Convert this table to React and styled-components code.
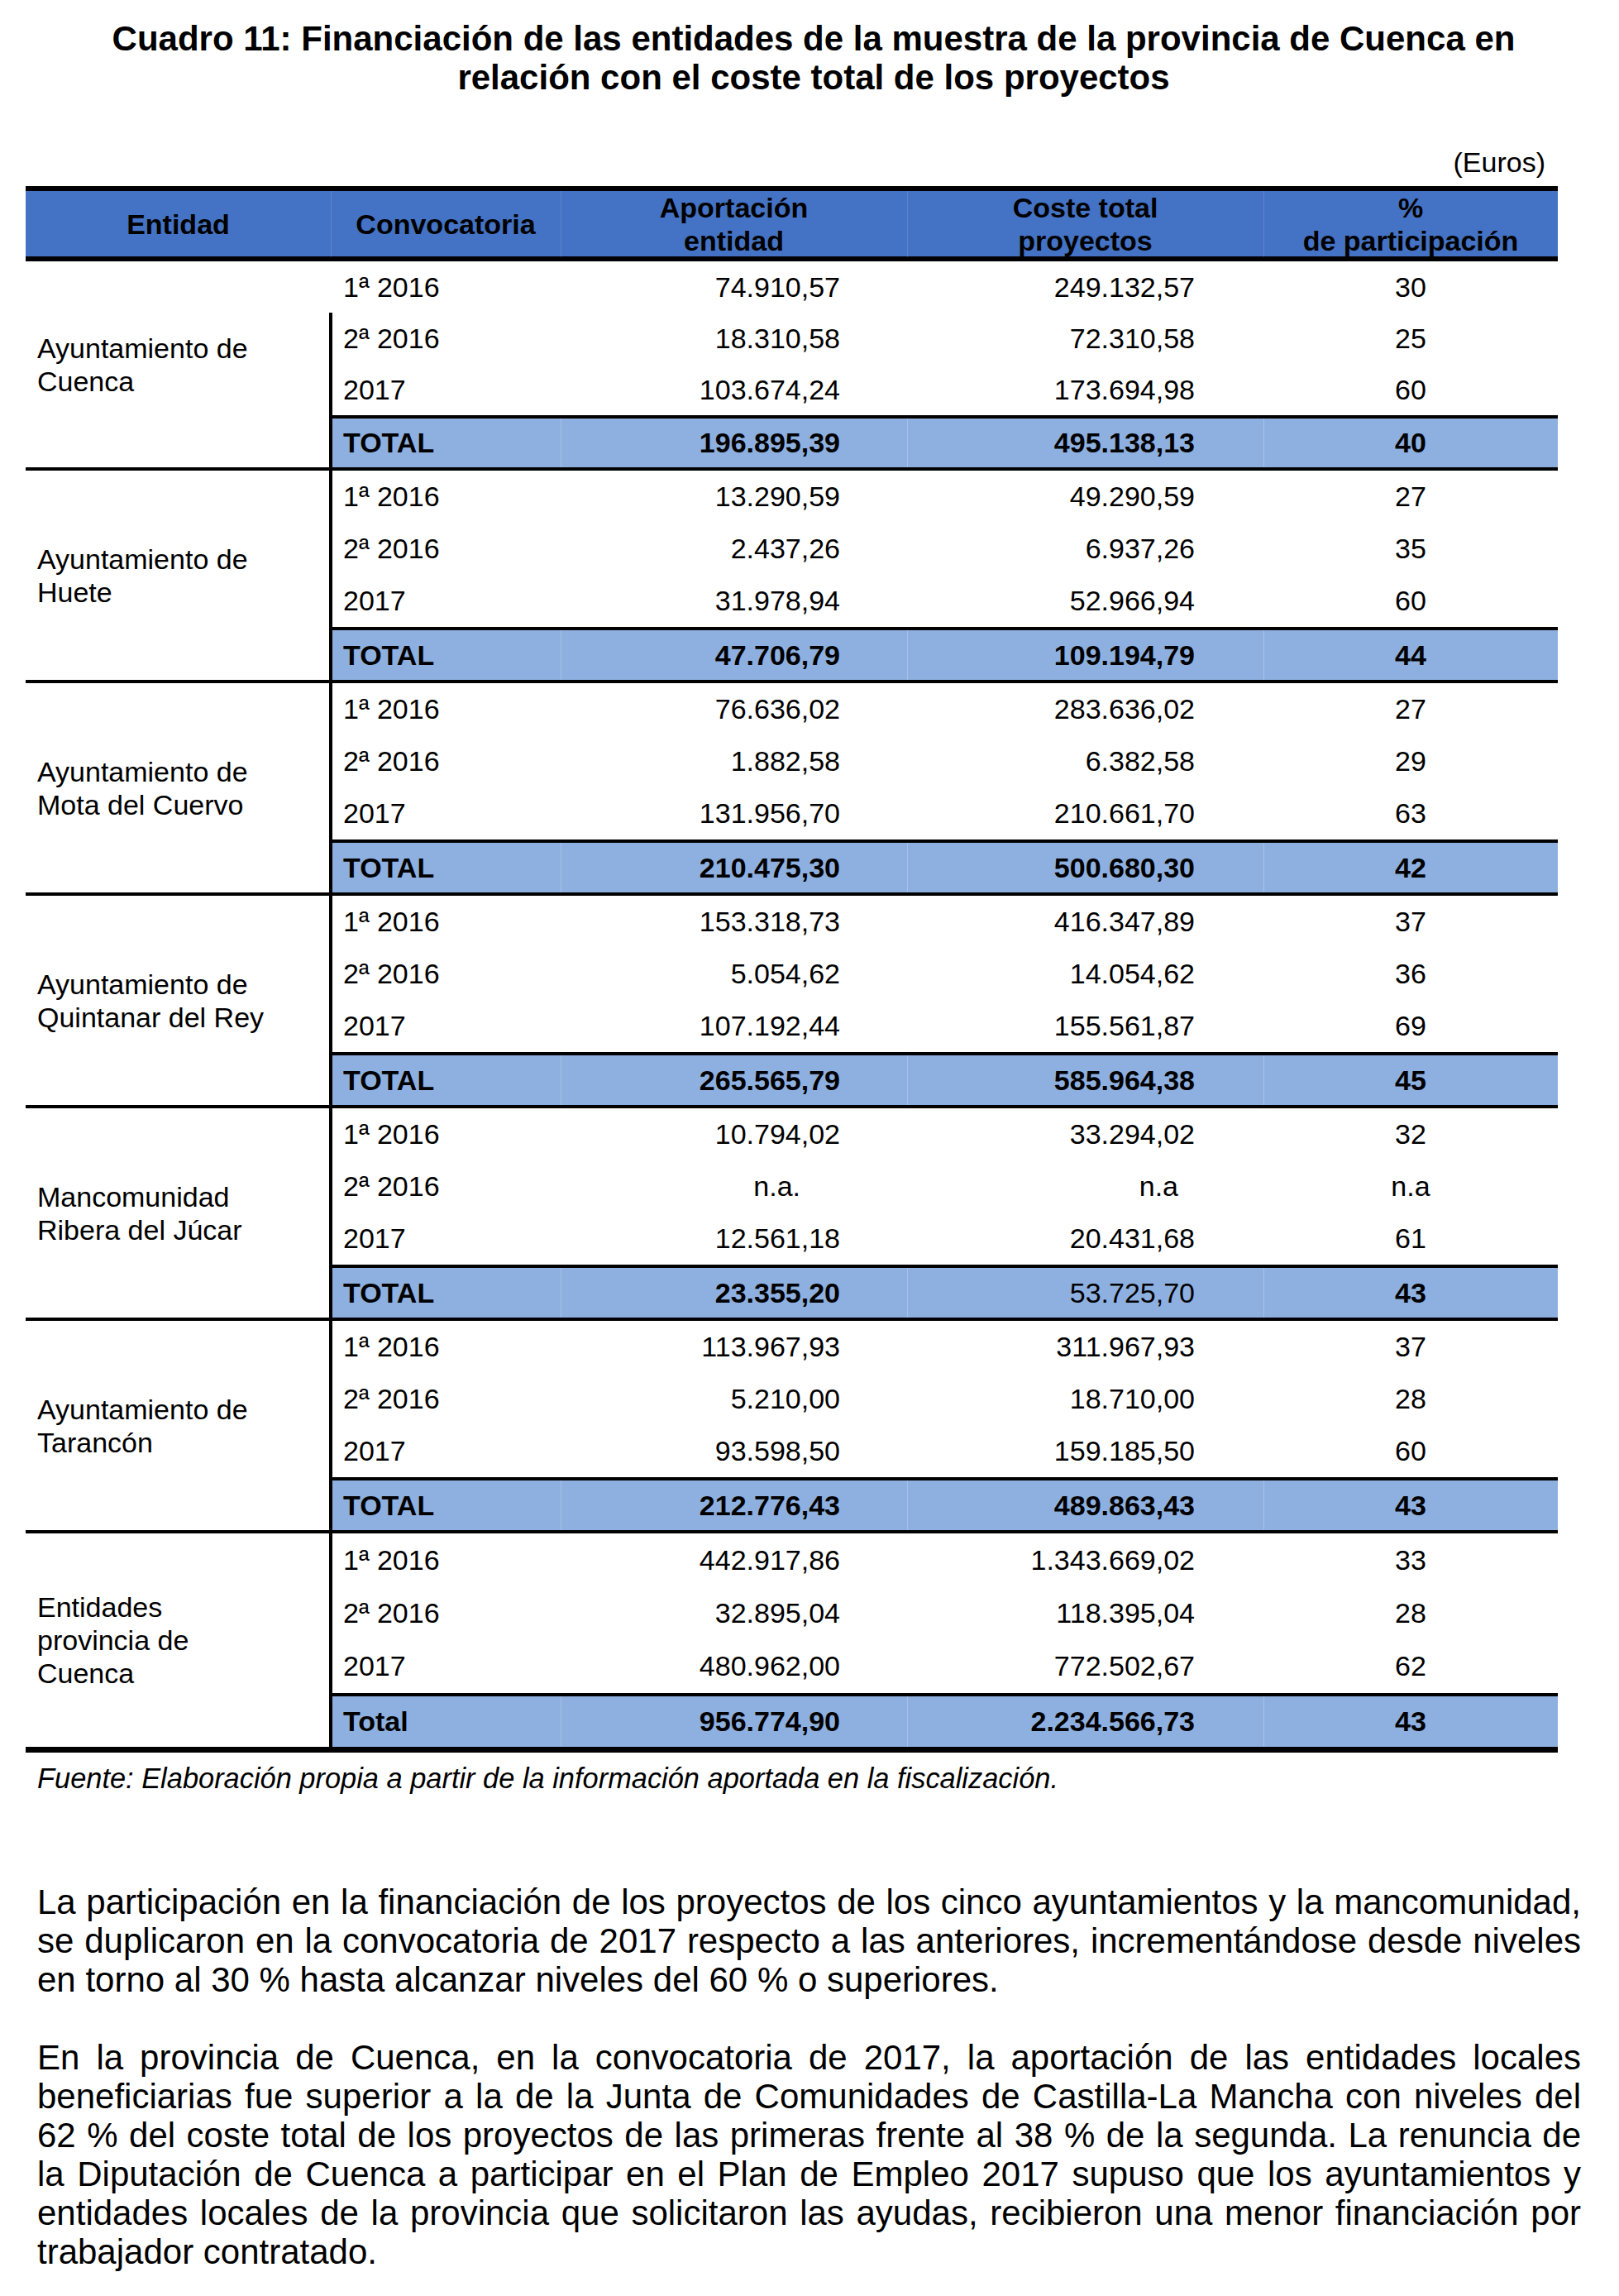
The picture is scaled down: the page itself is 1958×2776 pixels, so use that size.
import React from "react";
import styled, { createGlobalStyle } from "styled-components";

const Global = createGlobalStyle`
  html, body { margin: 0; padding: 0; background: #fff; }
  body { font-family: "Liberation Sans", Arial, sans-serif; color: #000; }
`;

const Page = styled.div`
  width: 1958px;
  padding-top: 23px;
  box-sizing: border-box;
`;

const Title = styled.h1`
  margin: 0;
  padding: 0 74px 0 84px;
  font-size: 42px;
  line-height: 47px;
  font-weight: 700;
  text-align: center;
`;

const Unit = styled.div`
  margin-top: 60px;
  padding-right: 89px;
  text-align: right;
  font-size: 34px;
  line-height: 38px;
`;

const Table = styled.div`
  margin: 10px 0 0 31px;
  width: 1853px;
`;

const HeaderRow = styled.div`
  display: grid;
  grid-template-columns: 369px 278px 419px 431px 356px;
  height: 79px;
  background: #4472c4;
  border-top: 6px solid #000;
  border-bottom: 6px solid #000;
`;

const HeaderCell = styled.div`
  display: flex;
  align-items: center;
  justify-content: center;
  text-align: center;
  font-size: 34px;
  line-height: 40px;
  font-weight: 700;
  box-shadow: ${(p) => (p.$first ? "none" : "inset 1px 0 0 rgba(255,255,255,0.14)")};
`;

const Group = styled.div`
  display: grid;
  grid-template-columns: 367px 1486px;
  border-bottom: ${(p) => p.$bottom}px solid #000;
`;

const EntityCell = styled.div`
  display: flex;
  align-items: center;
  padding-left: 14px;
  font-size: 34px;
  line-height: 40px;
`;

const Rows = styled.div`
  display: flex;
  flex-direction: column;
`;

const Row = styled.div`
  display: grid;
  grid-template-columns: 276px 419px 431px 356px;
  height: ${(p) => p.$h}px;
  border-left: 4px solid ${(p) => (p.$noLine ? "transparent" : "#000")};
  background: ${(p) => (p.$total ? "#8eb0e0" : "#fff")};
  border-top: ${(p) => (p.$total ? "4px solid #000" : "none")};
  font-weight: ${(p) => (p.$total ? 700 : 400)};
`;

const Cell = styled.div`
  display: flex;
  align-items: center;
  justify-content: ${(p) =>
    p.$align === "right" ? "flex-end" : p.$align === "center" ? "center" : "flex-start"};
  padding-left: ${(p) => p.$pl || 0}px;
  padding-right: ${(p) => p.$pr || 0}px;
  font-size: 34px;
  white-space: nowrap;
  font-weight: ${(p) => (p.$regular ? 400 : "inherit")};
  box-shadow: ${(p) => (p.$divider ? "inset 1px 0 0 rgba(255,255,255,0.22)" : "none")};
`;

const Source = styled.p`
  margin: 12px 0 0 45px;
  font-size: 34.4px;
  line-height: 39px;
  font-style: italic;
`;

const Body = styled.div`
  margin-top: 106px;
  padding: 0 46px 0 45px;
  display: flex;
  flex-direction: column;
  gap: 47px;
`;

const Paragraph = styled.p`
  margin: 0;
  font-size: 42px;
  line-height: 47px;
  text-align: justify;
`;

const PARA_1 =
  "La participación en la financiación de los proyectos de los cinco ayuntamientos y la mancomunidad, se duplicaron en la convocatoria de 2017 respecto a las anteriores, incrementándose desde niveles en torno al 30\u00a0% hasta alcanzar niveles del 60\u00a0% o superiores.";

const PARA_2 =
  "En la provincia de Cuenca, en la convocatoria de 2017, la aportación de las entidades locales beneficiarias fue superior a la de la Junta de Comunidades de Castilla-La Mancha con niveles del 62\u00a0% del coste total de los proyectos de las primeras frente al 38\u00a0% de la segunda. La renuncia de la Diputación de Cuenca a participar en el Plan de Empleo 2017 supuso que los ayuntamientos y entidades locales de la provincia que solicitaron las ayudas, recibieron una menor financiación por trabajador contratado.";

const groups = [
  {
    name: ["Ayuntamiento de", "Cuenca"],
    rows: [
      ["1ª 2016", "74.910,57", "249.132,57", "30"],
      ["2ª 2016", "18.310,58", "72.310,58", "25"],
      ["2017", "103.674,24", "173.694,98", "60"],
    ],
    total: ["TOTAL", "196.895,39", "495.138,13", "40"],
    h: [62, 62, 62],
    th: 59,
    firstNoLine: true,
  },
  {
    name: ["Ayuntamiento de", "Huete"],
    rows: [
      ["1ª 2016", "13.290,59", "49.290,59", "27"],
      ["2ª 2016", "2.437,26", "6.937,26", "35"],
      ["2017", "31.978,94", "52.966,94", "60"],
    ],
    total: ["TOTAL", "47.706,79", "109.194,79", "44"],
  },
  {
    name: ["Ayuntamiento de", "Mota del Cuervo"],
    rows: [
      ["1ª 2016", "76.636,02", "283.636,02", "27"],
      ["2ª 2016", "1.882,58", "6.382,58", "29"],
      ["2017", "131.956,70", "210.661,70", "63"],
    ],
    total: ["TOTAL", "210.475,30", "500.680,30", "42"],
  },
  {
    name: ["Ayuntamiento de", "Quintanar del Rey"],
    rows: [
      ["1ª 2016", "153.318,73", "416.347,89", "37"],
      ["2ª 2016", "5.054,62", "14.054,62", "36"],
      ["2017", "107.192,44", "155.561,87", "69"],
    ],
    total: ["TOTAL", "265.565,79", "585.964,38", "45"],
  },
  {
    name: ["Mancomunidad", "Ribera del Júcar"],
    rows: [
      ["1ª 2016", "10.794,02", "33.294,02", "32"],
      ["2ª 2016", "n.a.", "n.a", "n.a", true],
      ["2017", "12.561,18", "20.431,68", "61"],
    ],
    total: ["TOTAL", "23.355,20", "53.725,70", "43"],
    regularCoste: true,
  },
  {
    name: ["Ayuntamiento de", "Tarancón"],
    rows: [
      ["1ª 2016", "113.967,93", "311.967,93", "37"],
      ["2ª 2016", "5.210,00", "18.710,00", "28"],
      ["2017", "93.598,50", "159.185,50", "60"],
    ],
    total: ["TOTAL", "212.776,43", "489.863,43", "43"],
  },
  {
    name: ["Entidades", "provincia de", "Cuenca"],
    rows: [
      ["1ª 2016", "442.917,86", "1.343.669,02", "33"],
      ["2ª 2016", "32.895,04", "118.395,04", "28"],
      ["2017", "480.962,00", "772.502,67", "62"],
    ],
    total: ["Total", "956.774,90", "2.234.566,73", "43"],
    h: [64, 64, 65],
    th: 61,
    bottom: 7,
  },
];

function DataCells({ r, total, regularCoste }) {
  const na = r[4];
  return (
    <>
      <Cell $pl={13}>{r[0]}</Cell>
      <Cell $align="right" $pr={na ? 129 : 81} $divider={total}>
        {r[1]}
      </Cell>
      <Cell $align="right" $pr={na ? 103 : 83} $divider={total} $regular={regularCoste}>
        {r[2]}
      </Cell>
      <Cell $align="center" $divider={total}>
        {r[3]}
      </Cell>
    </>
  );
}

export default function App() {
  return (
    <Page>
      <Global />
      <Title>
        Cuadro 11: Financiación de las entidades de la muestra de la provincia de Cuenca en
        relación con el coste total de los proyectos
      </Title>
      <Unit>(Euros)</Unit>
      <Table>
        <HeaderRow>
          <HeaderCell $first>Entidad</HeaderCell>
          <HeaderCell>Convocatoria</HeaderCell>
          <HeaderCell>
            Aportación
            <br />
            entidad
          </HeaderCell>
          <HeaderCell>
            Coste total
            <br />
            proyectos
          </HeaderCell>
          <HeaderCell>
            %
            <br />
            de participación
          </HeaderCell>
        </HeaderRow>
        {groups.map((g, gi) => (
          <Group key={gi} $bottom={g.bottom || 4}>
            <EntityCell>
              <div>
                {g.name.map((n, i) => (
                  <React.Fragment key={i}>
                    {i > 0 && <br />}
                    {n}
                  </React.Fragment>
                ))}
              </div>
            </EntityCell>
            <Rows>
              {g.rows.map((r, ri) => (
                <Row
                  key={ri}
                  $h={g.h ? g.h[ri] : 63}
                  $noLine={g.firstNoLine && ri === 0}
                >
                  <DataCells r={r} />
                </Row>
              ))}
              <Row $total $h={g.th || 60}>
                <DataCells r={g.total} total regularCoste={g.regularCoste} />
              </Row>
            </Rows>
          </Group>
        ))}
      </Table>
      <Source>Fuente: Elaboración propia a partir de la información aportada en la fiscalización.</Source>
      <Body>
        <Paragraph>{PARA_1}</Paragraph>
        <Paragraph>{PARA_2}</Paragraph>
      </Body>
    </Page>
  );
}
